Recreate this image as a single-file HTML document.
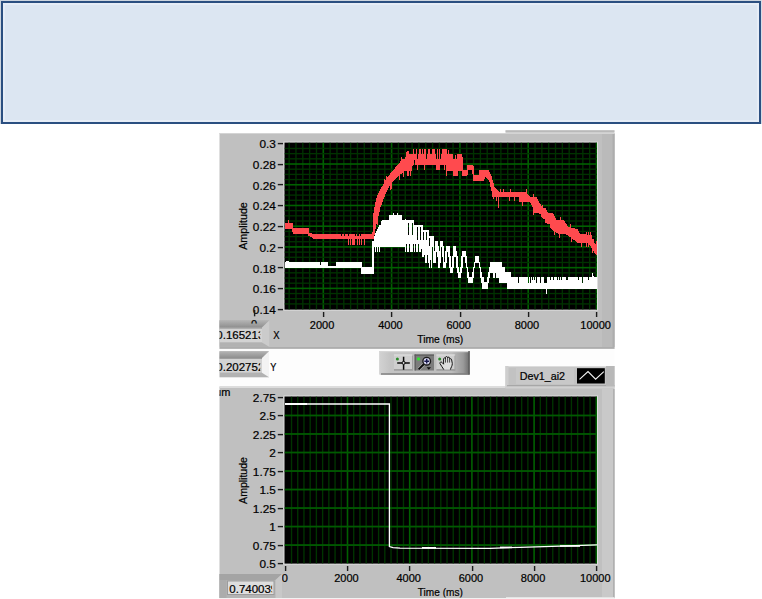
<!DOCTYPE html>
<html lang="en"><head><meta charset="utf-8"><title>Waveform charts</title>
<style>html,body{margin:0;padding:0;background:#fff;}body{width:762px;height:599px;overflow:hidden;}svg{display:block;}text{font-family:"Liberation Sans", "DejaVu Sans", sans-serif;font-size:11px;fill:#000;stroke:#000;stroke-width:0.22px;}.yl{font-size:11.8px;}.cv{font-size:11.5px;}</style></head><body>
<svg width="762" height="599" viewBox="0 0 762 599">
<rect x="0" y="0" width="762" height="599" fill="#ffffff"/>
<rect x="2" y="2" width="758" height="121" fill="#dce6f2" stroke="#2b4f81" stroke-width="2"/>
<rect x="4" y="4" width="754" height="117" fill="none" stroke="#e6edf7" stroke-width="2"/>
<rect x="0" y="0" width="762" height="1" fill="#cdd5df"/><rect x="0" y="0" width="1" height="124" fill="#cdd5df"/><rect x="761" y="0" width="1" height="124" fill="#d6dde6"/>
<rect x="505.5" y="130.5" width="109" height="4" fill="#cfcfcf"/>
<rect x="505.5" y="130.5" width="109" height="1" fill="#a4a4a4"/>
<rect x="219.5" y="133" width="395" height="215.5" fill="#c0c0c0"/>
<rect x="219.5" y="133" width="395" height="1" fill="#d4d4d4"/>
<rect x="219.5" y="347.5" width="395" height="1.2" fill="#9a9a9a"/>
<rect x="602" y="134" width="12.5" height="213" fill="#bababa"/>
<rect x="612.5" y="134" width="2" height="213" fill="#adadad"/>
<rect x="283.5" y="141.6" width="314.5" height="169" fill="#dedede"/>
<rect x="284.5" y="142.6" width="312.5" height="167.00000000000003" fill="#000"/>
<clipPath id="c1"><rect x="284.5" y="142.6" width="312.5" height="167.00000000000003"/></clipPath>
<g clip-path="url(#c1)">
<rect x="288.47" y="142.6" width="1.35" height="167.00000000000003" fill="#003200"/>
<rect x="295.3" y="142.6" width="1.35" height="167.00000000000003" fill="#003200"/>
<rect x="302.13" y="142.6" width="1.35" height="167.00000000000003" fill="#003200"/>
<rect x="308.96" y="142.6" width="1.35" height="167.00000000000003" fill="#003200"/>
<rect x="315.79" y="142.6" width="1.35" height="167.00000000000003" fill="#003200"/>
<rect x="322.5" y="142.6" width="1.6" height="167.00000000000003" fill="#006000"/>
<rect x="329.45" y="142.6" width="1.35" height="167.00000000000003" fill="#003200"/>
<rect x="336.28" y="142.6" width="1.35" height="167.00000000000003" fill="#003200"/>
<rect x="343.11" y="142.6" width="1.35" height="167.00000000000003" fill="#003200"/>
<rect x="349.94" y="142.6" width="1.35" height="167.00000000000003" fill="#003200"/>
<rect x="356.77" y="142.6" width="1.35" height="167.00000000000003" fill="#003200"/>
<rect x="363.6" y="142.6" width="1.35" height="167.00000000000003" fill="#003200"/>
<rect x="370.43" y="142.6" width="1.35" height="167.00000000000003" fill="#003200"/>
<rect x="377.26" y="142.6" width="1.35" height="167.00000000000003" fill="#003200"/>
<rect x="384.09" y="142.6" width="1.35" height="167.00000000000003" fill="#003200"/>
<rect x="390.8" y="142.6" width="1.6" height="167.00000000000003" fill="#006000"/>
<rect x="397.75" y="142.6" width="1.35" height="167.00000000000003" fill="#003200"/>
<rect x="404.58" y="142.6" width="1.35" height="167.00000000000003" fill="#003200"/>
<rect x="411.41" y="142.6" width="1.35" height="167.00000000000003" fill="#003200"/>
<rect x="418.24" y="142.6" width="1.35" height="167.00000000000003" fill="#003200"/>
<rect x="425.07" y="142.6" width="1.35" height="167.00000000000003" fill="#003200"/>
<rect x="431.9" y="142.6" width="1.35" height="167.00000000000003" fill="#003200"/>
<rect x="438.73" y="142.6" width="1.35" height="167.00000000000003" fill="#003200"/>
<rect x="445.56" y="142.6" width="1.35" height="167.00000000000003" fill="#003200"/>
<rect x="452.39" y="142.6" width="1.35" height="167.00000000000003" fill="#003200"/>
<rect x="459.1" y="142.6" width="1.6" height="167.00000000000003" fill="#006000"/>
<rect x="466.05" y="142.6" width="1.35" height="167.00000000000003" fill="#003200"/>
<rect x="472.88" y="142.6" width="1.35" height="167.00000000000003" fill="#003200"/>
<rect x="479.71" y="142.6" width="1.35" height="167.00000000000003" fill="#003200"/>
<rect x="486.54" y="142.6" width="1.35" height="167.00000000000003" fill="#003200"/>
<rect x="493.37" y="142.6" width="1.35" height="167.00000000000003" fill="#003200"/>
<rect x="500.2" y="142.6" width="1.35" height="167.00000000000003" fill="#003200"/>
<rect x="507.03" y="142.6" width="1.35" height="167.00000000000003" fill="#003200"/>
<rect x="513.86" y="142.6" width="1.35" height="167.00000000000003" fill="#003200"/>
<rect x="520.69" y="142.6" width="1.35" height="167.00000000000003" fill="#003200"/>
<rect x="527.4" y="142.6" width="1.6" height="167.00000000000003" fill="#006000"/>
<rect x="534.35" y="142.6" width="1.35" height="167.00000000000003" fill="#003200"/>
<rect x="541.18" y="142.6" width="1.35" height="167.00000000000003" fill="#003200"/>
<rect x="548.01" y="142.6" width="1.35" height="167.00000000000003" fill="#003200"/>
<rect x="554.84" y="142.6" width="1.35" height="167.00000000000003" fill="#003200"/>
<rect x="561.67" y="142.6" width="1.35" height="167.00000000000003" fill="#003200"/>
<rect x="568.5" y="142.6" width="1.35" height="167.00000000000003" fill="#003200"/>
<rect x="575.33" y="142.6" width="1.35" height="167.00000000000003" fill="#003200"/>
<rect x="582.16" y="142.6" width="1.35" height="167.00000000000003" fill="#003200"/>
<rect x="588.99" y="142.6" width="1.35" height="167.00000000000003" fill="#003200"/>
<rect x="595.7" y="142.6" width="1.6" height="167.00000000000003" fill="#006000"/>
<rect x="284.5" y="303.24" width="312.5" height="1.35" fill="#003200"/>
<rect x="284.5" y="298.06" width="312.5" height="1.35" fill="#003200"/>
<rect x="284.5" y="292.88" width="312.5" height="1.35" fill="#003200"/>
<rect x="284.5" y="287.58" width="312.5" height="1.6" fill="#006000"/>
<rect x="284.5" y="282.51" width="312.5" height="1.35" fill="#003200"/>
<rect x="284.5" y="277.33" width="312.5" height="1.35" fill="#003200"/>
<rect x="284.5" y="272.15" width="312.5" height="1.35" fill="#003200"/>
<rect x="284.5" y="266.85" width="312.5" height="1.6" fill="#006000"/>
<rect x="284.5" y="261.79" width="312.5" height="1.35" fill="#003200"/>
<rect x="284.5" y="256.61" width="312.5" height="1.35" fill="#003200"/>
<rect x="284.5" y="251.43" width="312.5" height="1.35" fill="#003200"/>
<rect x="284.5" y="246.12" width="312.5" height="1.6" fill="#006000"/>
<rect x="284.5" y="241.06" width="312.5" height="1.35" fill="#003200"/>
<rect x="284.5" y="235.88" width="312.5" height="1.35" fill="#003200"/>
<rect x="284.5" y="230.7" width="312.5" height="1.35" fill="#003200"/>
<rect x="284.5" y="225.4" width="312.5" height="1.6" fill="#006000"/>
<rect x="284.5" y="220.34" width="312.5" height="1.35" fill="#003200"/>
<rect x="284.5" y="215.16" width="312.5" height="1.35" fill="#003200"/>
<rect x="284.5" y="209.98" width="312.5" height="1.35" fill="#003200"/>
<rect x="284.5" y="204.68" width="312.5" height="1.6" fill="#006000"/>
<rect x="284.5" y="199.61" width="312.5" height="1.35" fill="#003200"/>
<rect x="284.5" y="194.43" width="312.5" height="1.35" fill="#003200"/>
<rect x="284.5" y="189.25" width="312.5" height="1.35" fill="#003200"/>
<rect x="284.5" y="183.95" width="312.5" height="1.6" fill="#006000"/>
<rect x="284.5" y="178.89" width="312.5" height="1.35" fill="#003200"/>
<rect x="284.5" y="173.71" width="312.5" height="1.35" fill="#003200"/>
<rect x="284.5" y="168.53" width="312.5" height="1.35" fill="#003200"/>
<rect x="284.5" y="163.22" width="312.5" height="1.6" fill="#006000"/>
<rect x="284.5" y="158.16" width="312.5" height="1.35" fill="#003200"/>
<rect x="284.5" y="152.98" width="312.5" height="1.35" fill="#003200"/>
<rect x="284.5" y="147.8" width="312.5" height="1.35" fill="#003200"/>
<g fill="#ff4a4e" shape-rendering="crispEdges"><rect x="285" y="222.5" width="1" height="6.8"/><rect x="286" y="222.5" width="1" height="6.8"/><rect x="287" y="222.5" width="1" height="6.8"/><rect x="288" y="219.5" width="1" height="9.8"/><rect x="289" y="222.5" width="1" height="6.8"/><rect x="290" y="222.5" width="1" height="6.8"/><rect x="291" y="222.5" width="1" height="6.8"/><rect x="292" y="222.5" width="1" height="9.2"/><rect x="293" y="227.8" width="1" height="6.4"/><rect x="294" y="227.8" width="1" height="6.4"/><rect x="295" y="227.8" width="1" height="6.4"/><rect x="296" y="227.8" width="1" height="6.4"/><rect x="297" y="227.8" width="1" height="6.4"/><rect x="298" y="227.8" width="1" height="6.4"/><rect x="299" y="227.8" width="1" height="6.4"/><rect x="300" y="227.8" width="1" height="6.4"/><rect x="301" y="227.8" width="1" height="6.4"/><rect x="302" y="227.8" width="1" height="6.4"/><rect x="303" y="227.8" width="1" height="6.4"/><rect x="304" y="227.8" width="1" height="6.4"/><rect x="305" y="227.8" width="1" height="6.4"/><rect x="306" y="227.8" width="1" height="6.4"/><rect x="307" y="227.8" width="1" height="6.4"/><rect x="308" y="227.8" width="1" height="7.9"/><rect x="309" y="233.1" width="1" height="3.2"/><rect x="310" y="233.3" width="1" height="3.6"/><rect x="311" y="233.4" width="1" height="4"/><rect x="312" y="233.6" width="1" height="4.4"/><rect x="313" y="233.8" width="1" height="4.8"/><rect x="314" y="234" width="1" height="5.3"/><rect x="315" y="234.2" width="1" height="5.1"/><rect x="316" y="234.2" width="1" height="5.1"/><rect x="317" y="234.2" width="1" height="5.1"/><rect x="318" y="234.2" width="1" height="5.1"/><rect x="319" y="234.2" width="1" height="5.1"/><rect x="320" y="234.2" width="1" height="5.1"/><rect x="321" y="234.2" width="1" height="5.1"/><rect x="322" y="234.2" width="1" height="5.1"/><rect x="323" y="234.2" width="1" height="5.1"/><rect x="324" y="234.2" width="1" height="5.1"/><rect x="325" y="234.2" width="1" height="5.1"/><rect x="326" y="234.2" width="1" height="5.1"/><rect x="327" y="234.2" width="1" height="5.1"/><rect x="328" y="234.2" width="1" height="5.1"/><rect x="329" y="234.2" width="1" height="5.1"/><rect x="330" y="234.2" width="1" height="5.1"/><rect x="331" y="234.2" width="1" height="5.1"/><rect x="332" y="234.2" width="1" height="5.1"/><rect x="333" y="234.2" width="1" height="5.1"/><rect x="334" y="234.2" width="1" height="5.1"/><rect x="335" y="234.2" width="1" height="5.1"/><rect x="336" y="234.2" width="1" height="5.1"/><rect x="337" y="234.2" width="1" height="5.1"/><rect x="338" y="234.2" width="1" height="5.1"/><rect x="339" y="234.2" width="1" height="5.1"/><rect x="340" y="234.2" width="1" height="5.1"/><rect x="341" y="235.7" width="1" height="3.6"/><rect x="342" y="234.2" width="1" height="5.1"/><rect x="343" y="234.2" width="1" height="5.1"/><rect x="344" y="235.7" width="1" height="3.6"/><rect x="345" y="234.2" width="1" height="5.1"/><rect x="346" y="234.2" width="1" height="5.1"/><rect x="347" y="234.2" width="1" height="5.1"/><rect x="348" y="235.7" width="1" height="8.8"/><rect x="349" y="234.2" width="1" height="5.1"/><rect x="350" y="234.2" width="1" height="10.3"/><rect x="351" y="234.2" width="1" height="5.1"/><rect x="352" y="234.2" width="1" height="10.3"/><rect x="353" y="234.2" width="1" height="10.3"/><rect x="354" y="234.2" width="1" height="10.3"/><rect x="355" y="235.7" width="1" height="3.6"/><rect x="356" y="234.2" width="1" height="5.1"/><rect x="357" y="235.7" width="1" height="8.8"/><rect x="358" y="235.7" width="1" height="3.6"/><rect x="359" y="234.2" width="1" height="10.3"/><rect x="360" y="235.7" width="1" height="3.6"/><rect x="361" y="234.2" width="1" height="10.3"/><rect x="362" y="234.2" width="1" height="5.1"/><rect x="363" y="234.2" width="1" height="5.1"/><rect x="364" y="234.2" width="1" height="10.3"/><rect x="365" y="234.2" width="1" height="5.1"/><rect x="366" y="234.2" width="1" height="5.1"/><rect x="367" y="234.2" width="1" height="5.1"/><rect x="368" y="234.2" width="1" height="5.1"/><rect x="369" y="234.2" width="1" height="5.1"/><rect x="370" y="234.2" width="1" height="5.1"/><rect x="371" y="234.2" width="1" height="5.1"/><rect x="372" y="231.7" width="1" height="7.6"/><rect x="373" y="213.4" width="1" height="25.8"/><rect x="374" y="206.5" width="1" height="28.7"/><rect x="375" y="202" width="1" height="26.7"/><rect x="376" y="197.5" width="1" height="26.9"/><rect x="377" y="195.2" width="1" height="29.9"/><rect x="378" y="193.2" width="1" height="22.6"/><rect x="379" y="191.2" width="1" height="20.3"/><rect x="380" y="189.2" width="1" height="18.1"/><rect x="381" y="187.3" width="1" height="17.3"/><rect x="382" y="185.6" width="1" height="16.4"/><rect x="383" y="183.8" width="1" height="15.5"/><rect x="384" y="179.1" width="1" height="17.5"/><rect x="385" y="180.3" width="1" height="14"/><rect x="386" y="175.6" width="1" height="16.8"/><rect x="387" y="177" width="1" height="13.3"/><rect x="388" y="175.8" width="1" height="12.5"/><rect x="389" y="174.6" width="1" height="11.8"/><rect x="390" y="173.4" width="1" height="16.2"/><rect x="391" y="172.2" width="1" height="16.3"/><rect x="392" y="171" width="1" height="11.4"/><rect x="393" y="169.8" width="1" height="11.5"/><rect x="394" y="168.6" width="1" height="11.6"/><rect x="395" y="167.4" width="1" height="11.6"/><rect x="396" y="166.2" width="1" height="11.7"/><rect x="397" y="165" width="1" height="12"/><rect x="398" y="163.8" width="1" height="12.3"/><rect x="399" y="162.6" width="1" height="17.6"/><rect x="400" y="161.4" width="1" height="13"/><rect x="401" y="157.2" width="1" height="16.3"/><rect x="402" y="159.4" width="1" height="13.2"/><rect x="403" y="159.2" width="1" height="17.6"/><rect x="404" y="158.9" width="1" height="12.1"/><rect x="405" y="156.9" width="1" height="14.1"/><rect x="406" y="151.6" width="1" height="19.4"/><rect x="407" y="151.1" width="1" height="24.9"/><rect x="408" y="151" width="1" height="25"/><rect x="409" y="153.9" width="1" height="17.1"/><rect x="410" y="153.8" width="1" height="22.2"/><rect x="411" y="153.7" width="1" height="17.3"/><rect x="412" y="153.6" width="1" height="12.8"/><rect x="413" y="149.2" width="1" height="16"/><rect x="414" y="154.4" width="1" height="5.6"/><rect x="415" y="154.4" width="1" height="10.8"/><rect x="416" y="149.2" width="1" height="16"/><rect x="417" y="158.6" width="1" height="11.8"/><rect x="418" y="154.4" width="1" height="10.8"/><rect x="419" y="149.2" width="1" height="16"/><rect x="420" y="149.2" width="1" height="16"/><rect x="421" y="154.4" width="1" height="10.8"/><rect x="422" y="149.2" width="1" height="16"/><rect x="423" y="154.4" width="1" height="10.8"/><rect x="424" y="149.2" width="1" height="21.2"/><rect x="425" y="149.2" width="1" height="16"/><rect x="426" y="158.6" width="1" height="6.6"/><rect x="427" y="154.4" width="1" height="10.8"/><rect x="428" y="149.2" width="1" height="16"/><rect x="429" y="149.2" width="1" height="16"/><rect x="430" y="154.4" width="1" height="10.8"/><rect x="431" y="154.4" width="1" height="10.8"/><rect x="432" y="149.2" width="1" height="16"/><rect x="433" y="149.2" width="1" height="16"/><rect x="434" y="149.2" width="1" height="16"/><rect x="435" y="154.4" width="1" height="10.8"/><rect x="436" y="158.6" width="1" height="11.8"/><rect x="437" y="149.2" width="1" height="21.2"/><rect x="438" y="158.6" width="1" height="11.8"/><rect x="439" y="149.2" width="1" height="21.2"/><rect x="440" y="158.6" width="1" height="6.6"/><rect x="441" y="154.4" width="1" height="10.8"/><rect x="442" y="149.2" width="1" height="16"/><rect x="443" y="149.2" width="1" height="16"/><rect x="444" y="149.2" width="1" height="21.2"/><rect x="445" y="149.2" width="1" height="16"/><rect x="446" y="149.2" width="1" height="26.4"/><rect x="447" y="154.2" width="1" height="16.8"/><rect x="448" y="150.2" width="1" height="20.8"/><rect x="449" y="154.2" width="1" height="16.8"/><rect x="450" y="154.2" width="1" height="16.8"/><rect x="451" y="154.2" width="1" height="16.8"/><rect x="452" y="154.2" width="1" height="16.8"/><rect x="453" y="158.9" width="1" height="17.3"/><rect x="454" y="158.9" width="1" height="17.3"/><rect x="455" y="154.9" width="1" height="21.3"/><rect x="456" y="158.9" width="1" height="17.3"/><rect x="457" y="154.2" width="1" height="22"/><rect x="458" y="154.2" width="1" height="16.8"/><rect x="459" y="154.2" width="1" height="16.8"/><rect x="460" y="154.2" width="1" height="16.8"/><rect x="461" y="154.2" width="1" height="16.8"/><rect x="462" y="156.5" width="1" height="19.5"/><rect x="463" y="170" width="1" height="6"/><rect x="464" y="170" width="1" height="6"/><rect x="465" y="170" width="1" height="6"/><rect x="466" y="170" width="1" height="6"/><rect x="467" y="164.8" width="1" height="10.4"/><rect x="468" y="164.8" width="1" height="5.2"/><rect x="469" y="164.8" width="1" height="5.2"/><rect x="470" y="164.8" width="1" height="5.2"/><rect x="471" y="164.8" width="1" height="5.2"/><rect x="472" y="164.8" width="1" height="9.2"/><rect x="473" y="166" width="1" height="14.5"/><rect x="474" y="174.5" width="1" height="6"/><rect x="475" y="174.7" width="1" height="5.8"/><rect x="476" y="174.9" width="1" height="5.6"/><rect x="477" y="175" width="1" height="5.5"/><rect x="478" y="175.2" width="1" height="5.3"/><rect x="479" y="170" width="1" height="10.5"/><rect x="480" y="170" width="1" height="10.5"/><rect x="481" y="170" width="1" height="10.5"/><rect x="482" y="170" width="1" height="10.5"/><rect x="483" y="170" width="1" height="10.5"/><rect x="484" y="170" width="1" height="8.7"/><rect x="485" y="170" width="1" height="6.9"/><rect x="486" y="170" width="1" height="7.9"/><rect x="487" y="170" width="1" height="8.9"/><rect x="488" y="170.2" width="1" height="9.7"/><rect x="489" y="172.2" width="1" height="10.1"/><rect x="490" y="174.2" width="1" height="12.7"/><rect x="491" y="176.4" width="1" height="14.8"/><rect x="492" y="179.9" width="1" height="17.3"/><rect x="493" y="183.4" width="1" height="15.8"/><rect x="494" y="186.6" width="1" height="10.4"/><rect x="495" y="187.8" width="1" height="9.2"/><rect x="496" y="189" width="1" height="12"/><rect x="497" y="190.2" width="1" height="6.8"/><rect x="498" y="191.3" width="1" height="17"/><rect x="499" y="191.8" width="1" height="5.2"/><rect x="500" y="188.8" width="1" height="8.2"/><rect x="501" y="191.8" width="1" height="5.2"/><rect x="502" y="191.8" width="1" height="5.2"/><rect x="503" y="188.8" width="1" height="8.2"/><rect x="504" y="191.8" width="1" height="5.2"/><rect x="505" y="191.8" width="1" height="5.2"/><rect x="506" y="191.8" width="1" height="5.2"/><rect x="507" y="191.8" width="1" height="5.2"/><rect x="508" y="191.8" width="1" height="5.2"/><rect x="509" y="191.8" width="1" height="9.2"/><rect x="510" y="188.8" width="1" height="8.2"/><rect x="511" y="191.8" width="1" height="5.2"/><rect x="512" y="191.8" width="1" height="5.2"/><rect x="513" y="191.8" width="1" height="5.2"/><rect x="514" y="191.8" width="1" height="9.2"/><rect x="515" y="191.8" width="1" height="5.2"/><rect x="516" y="191.8" width="1" height="5.2"/><rect x="517" y="191.8" width="1" height="5.2"/><rect x="518" y="191.8" width="1" height="5.2"/><rect x="519" y="191.8" width="1" height="9.8"/><rect x="520" y="191.8" width="1" height="9.8"/><rect x="521" y="191.8" width="1" height="9.8"/><rect x="522" y="191.8" width="1" height="13.8"/><rect x="523" y="191.8" width="1" height="9.8"/><rect x="524" y="191.8" width="1" height="9.8"/><rect x="525" y="191.8" width="1" height="9.8"/><rect x="526" y="189.4" width="1" height="12.2"/><rect x="527" y="193.6" width="1" height="8"/><rect x="528" y="194.8" width="1" height="6.8"/><rect x="529" y="195.9" width="1" height="5.7"/><rect x="530" y="197" width="1" height="6.4"/><rect x="531" y="197" width="1" height="8.3"/><rect x="532" y="197" width="1" height="10.3"/><rect x="533" y="194" width="1" height="20.5"/><rect x="534" y="197" width="1" height="15.8"/><rect x="535" y="197" width="1" height="16"/><rect x="536" y="197.2" width="1" height="15.9"/><rect x="537" y="198.9" width="1" height="14.3"/><rect x="538" y="200.7" width="1" height="12.6"/><rect x="539" y="202.5" width="1" height="11"/><rect x="540" y="204.2" width="1" height="9.3"/><rect x="541" y="205.9" width="1" height="11.4"/><rect x="542" y="204.5" width="1" height="13.7"/><rect x="543" y="207.5" width="1" height="11"/><rect x="544" y="207.5" width="1" height="11.3"/><rect x="545" y="207.7" width="1" height="15.6"/><rect x="546" y="210" width="1" height="13.4"/><rect x="547" y="212.3" width="1" height="11.2"/><rect x="548" y="212.8" width="1" height="10.9"/><rect x="549" y="212.8" width="1" height="11.1"/><rect x="550" y="212.7" width="1" height="15.3"/><rect x="551" y="212.7" width="1" height="16.7"/><rect x="552" y="212.7" width="1" height="17.3"/><rect x="553" y="213.9" width="1" height="16.8"/><rect x="554" y="215.9" width="1" height="19.5"/><rect x="555" y="217.9" width="1" height="14.1"/><rect x="556" y="219.7" width="1" height="13"/><rect x="557" y="219.7" width="1" height="13.7"/><rect x="558" y="219.7" width="1" height="14"/><rect x="559" y="219.7" width="1" height="18"/><rect x="560" y="216.7" width="1" height="17"/><rect x="561" y="219.7" width="1" height="14"/><rect x="562" y="219.7" width="1" height="14"/><rect x="563" y="219.8" width="1" height="13.9"/><rect x="564" y="221.3" width="1" height="12.4"/><rect x="565" y="222.8" width="1" height="11.2"/><rect x="566" y="224.3" width="1" height="10.4"/><rect x="567" y="225.8" width="1" height="9.6"/><rect x="568" y="226.8" width="1" height="9.3"/><rect x="569" y="227" width="1" height="9.7"/><rect x="570" y="224.3" width="1" height="13.1"/><rect x="571" y="227.5" width="1" height="14.5"/><rect x="572" y="227.8" width="1" height="11"/><rect x="573" y="228" width="1" height="11.6"/><rect x="574" y="228.3" width="1" height="12.1"/><rect x="575" y="228.5" width="1" height="12.6"/><rect x="576" y="228.8" width="1" height="13.2"/><rect x="577" y="229.2" width="1" height="13.6"/><rect x="578" y="231.2" width="1" height="11.8"/><rect x="579" y="233.1" width="1" height="9.9"/><rect x="580" y="233.8" width="1" height="9.2"/><rect x="581" y="233.9" width="1" height="13.1"/><rect x="582" y="234" width="1" height="9"/><rect x="583" y="234.1" width="1" height="8.9"/><rect x="584" y="234.2" width="1" height="8.8"/><rect x="585" y="234.3" width="1" height="8.7"/><rect x="586" y="231.5" width="1" height="15.5"/><rect x="587" y="234.6" width="1" height="8.4"/><rect x="588" y="231.7" width="1" height="15.5"/><rect x="589" y="234.8" width="1" height="9.9"/><rect x="590" y="231.9" width="1" height="14.3"/><rect x="591" y="235.3" width="1" height="12.4"/><rect x="592" y="238.7" width="1" height="14.6"/><rect x="593" y="239" width="1" height="11.9"/><rect x="594" y="243.3" width="1" height="9.3"/><rect x="595" y="243.6" width="1" height="10.7"/><rect x="596" y="241" width="1" height="14.3"/></g>
<g fill="#ffffff" shape-rendering="crispEdges"><rect x="285" y="262.3" width="1" height="5.5"/><rect x="286" y="260.8" width="1" height="7"/><rect x="287" y="260.8" width="1" height="7"/><rect x="288" y="260.8" width="1" height="7"/><rect x="289" y="262.3" width="1" height="5.5"/><rect x="290" y="262.3" width="1" height="5.5"/><rect x="291" y="262.3" width="1" height="5.5"/><rect x="292" y="262.3" width="1" height="5.5"/><rect x="293" y="262.3" width="1" height="5.5"/><rect x="294" y="262.3" width="1" height="5.5"/><rect x="295" y="262.3" width="1" height="5.5"/><rect x="296" y="262.3" width="1" height="5.5"/><rect x="297" y="262.3" width="1" height="5.5"/><rect x="298" y="262.3" width="1" height="5.5"/><rect x="299" y="262.3" width="1" height="5.5"/><rect x="300" y="262.3" width="1" height="5.5"/><rect x="301" y="262.3" width="1" height="5.5"/><rect x="302" y="262.3" width="1" height="5.5"/><rect x="303" y="262.3" width="1" height="5.5"/><rect x="304" y="262.3" width="1" height="5.5"/><rect x="305" y="262.3" width="1" height="5.5"/><rect x="306" y="262.3" width="1" height="5.5"/><rect x="307" y="262.3" width="1" height="5.5"/><rect x="308" y="262.3" width="1" height="5.5"/><rect x="309" y="262.3" width="1" height="5.5"/><rect x="310" y="262.3" width="1" height="5.5"/><rect x="311" y="262.3" width="1" height="5.5"/><rect x="312" y="262.3" width="1" height="5.5"/><rect x="313" y="262.3" width="1" height="5.5"/><rect x="314" y="262.3" width="1" height="5.5"/><rect x="315" y="262.3" width="1" height="5.5"/><rect x="316" y="262.3" width="1" height="5.5"/><rect x="317" y="262.3" width="1" height="5.5"/><rect x="318" y="262.3" width="1" height="5.5"/><rect x="319" y="262.3" width="1" height="5.5"/><rect x="320" y="265" width="1" height="2.8"/><rect x="321" y="262.3" width="1" height="5.5"/><rect x="322" y="262.3" width="1" height="5.5"/><rect x="323" y="262.3" width="1" height="5.5"/><rect x="324" y="262.3" width="1" height="5.5"/><rect x="325" y="262.3" width="1" height="5.5"/><rect x="326" y="262.3" width="1" height="5.5"/><rect x="327" y="262.3" width="1" height="5.5"/><rect x="328" y="266.4" width="1" height="1.4"/><rect x="329" y="266.4" width="1" height="1.4"/><rect x="330" y="266.4" width="1" height="1.4"/><rect x="331" y="266.4" width="1" height="1.4"/><rect x="332" y="266.4" width="1" height="1.4"/><rect x="333" y="266.4" width="1" height="1.4"/><rect x="334" y="266.4" width="1" height="1.4"/><rect x="335" y="266.4" width="1" height="1.4"/><rect x="336" y="262.3" width="1" height="5.5"/><rect x="337" y="262.3" width="1" height="5.5"/><rect x="338" y="262.3" width="1" height="5.5"/><rect x="339" y="262.3" width="1" height="5.5"/><rect x="340" y="262.3" width="1" height="5.5"/><rect x="341" y="262.3" width="1" height="5.5"/><rect x="342" y="262.3" width="1" height="5.5"/><rect x="343" y="262.3" width="1" height="5.5"/><rect x="344" y="262.3" width="1" height="5.5"/><rect x="345" y="262.3" width="1" height="5.5"/><rect x="346" y="262.3" width="1" height="5.5"/><rect x="347" y="262.3" width="1" height="5.5"/><rect x="348" y="262.3" width="1" height="5.5"/><rect x="349" y="262.3" width="1" height="5.5"/><rect x="350" y="262.3" width="1" height="5.5"/><rect x="351" y="262.3" width="1" height="5.5"/><rect x="352" y="262.3" width="1" height="5.5"/><rect x="353" y="262.3" width="1" height="5.5"/><rect x="354" y="262.3" width="1" height="5.5"/><rect x="355" y="262.3" width="1" height="5.5"/><rect x="356" y="262.3" width="1" height="5.5"/><rect x="357" y="262.3" width="1" height="5.5"/><rect x="358" y="262.3" width="1" height="5.5"/><rect x="359" y="262.3" width="1" height="5.5"/><rect x="360" y="262.3" width="1" height="5.5"/><rect x="361" y="262.3" width="1" height="11.3"/><rect x="362" y="267" width="1" height="6.6"/><rect x="363" y="267" width="1" height="6.6"/><rect x="364" y="267" width="1" height="6.6"/><rect x="365" y="267" width="1" height="6.6"/><rect x="366" y="267" width="1" height="6.6"/><rect x="367" y="267" width="1" height="6.6"/><rect x="368" y="267" width="1" height="6.6"/><rect x="369" y="267" width="1" height="6.6"/><rect x="370" y="267" width="1" height="6.6"/><rect x="371" y="267" width="1" height="6.6"/><rect x="372" y="241" width="1" height="32.6"/><rect x="373" y="241" width="1" height="32.6"/><rect x="374" y="236" width="1" height="10.9"/><rect x="375" y="232.9" width="1" height="18.7"/><rect x="376" y="230.6" width="1" height="16.3"/><rect x="377" y="228.6" width="1" height="23"/><rect x="378" y="226.5" width="1" height="20.4"/><rect x="379" y="224.5" width="1" height="27.1"/><rect x="380" y="224.5" width="1" height="22.4"/><rect x="381" y="221" width="1" height="25.9"/><rect x="382" y="220" width="1" height="26.9"/><rect x="383" y="219.9" width="1" height="27"/><rect x="384" y="219.8" width="1" height="27.1"/><rect x="385" y="219.8" width="1" height="27.1"/><rect x="386" y="219.7" width="1" height="27.2"/><rect x="387" y="219.7" width="1" height="27.2"/><rect x="388" y="219.6" width="1" height="27.3"/><rect x="389" y="214.8" width="1" height="32.1"/><rect x="390" y="214.8" width="1" height="32.1"/><rect x="391" y="214.8" width="1" height="32.1"/><rect x="392" y="214.8" width="1" height="32.1"/><rect x="393" y="213" width="1" height="33.9"/><rect x="394" y="214.8" width="1" height="32.1"/><rect x="395" y="214.8" width="1" height="32.1"/><rect x="396" y="214.8" width="1" height="32.1"/><rect x="397" y="213" width="1" height="33.9"/><rect x="398" y="214.8" width="1" height="32.1"/><rect x="399" y="214.8" width="1" height="32.1"/><rect x="400" y="214.8" width="1" height="32.1"/><rect x="401" y="214.8" width="1" height="32.1"/><rect x="402" y="219.6" width="1" height="27.3"/><rect x="403" y="219.6" width="1" height="27.3"/><rect x="404" y="219.6" width="1" height="27.3"/><rect x="405" y="219" width="1" height="32.7"/><rect x="406" y="220" width="1" height="24.2"/><rect x="407" y="220" width="1" height="32.2"/><rect x="408" y="220" width="1" height="3"/><rect x="408" y="235" width="1" height="17.2"/><rect x="409" y="220" width="1" height="24.2"/><rect x="410" y="220" width="1" height="32.2"/><rect x="411" y="220" width="1" height="32.2"/><rect x="412" y="220" width="1" height="3"/><rect x="412" y="235" width="1" height="17.2"/><rect x="413" y="220" width="1" height="24.2"/><rect x="414" y="225.2" width="1" height="27"/><rect x="415" y="225.2" width="1" height="19"/><rect x="416" y="225.2" width="1" height="27"/><rect x="417" y="225.2" width="1" height="2"/><rect x="417" y="240.2" width="1" height="12"/><rect x="418" y="225.2" width="1" height="19"/><rect x="419" y="225.2" width="1" height="27"/><rect x="420" y="225.2" width="1" height="2"/><rect x="420" y="240.2" width="1" height="12"/><rect x="421" y="225.2" width="1" height="24.2"/><rect x="422" y="225.2" width="1" height="32.2"/><rect x="423" y="230.4" width="1" height="2"/><rect x="423" y="240.4" width="1" height="17"/><rect x="424" y="230.4" width="1" height="24.2"/><rect x="425" y="230.4" width="1" height="32.2"/><rect x="426" y="230.4" width="1" height="2"/><rect x="426" y="240.4" width="1" height="22.2"/><rect x="427" y="230.4" width="1" height="24.2"/><rect x="428" y="230.4" width="1" height="32.2"/><rect x="429" y="235.6" width="1" height="2"/><rect x="429" y="245.6" width="1" height="22.2"/><rect x="430" y="235.6" width="1" height="24.2"/><rect x="431" y="235.6" width="1" height="32.2"/><rect x="432" y="235.6" width="1" height="11.4"/><rect x="433" y="235.6" width="1" height="27"/><rect x="434" y="251.2" width="1" height="11.4"/><rect x="435" y="240.8" width="1" height="21.8"/><rect x="436" y="240.8" width="1" height="11.4"/><rect x="437" y="240.8" width="1" height="16.6"/><rect x="438" y="246" width="1" height="21.8"/><rect x="439" y="251.2" width="1" height="16.6"/><rect x="440" y="240.8" width="1" height="21.8"/><rect x="441" y="240.8" width="1" height="6.2"/><rect x="442" y="240.8" width="1" height="16.6"/><rect x="443" y="246" width="1" height="21.8"/><rect x="444" y="261.6" width="1" height="6.2"/><rect x="445" y="251.2" width="1" height="16.6"/><rect x="446" y="246" width="1" height="16.6"/><rect x="447" y="246" width="1" height="6.2"/><rect x="448" y="246" width="1" height="11.4"/><rect x="449" y="246" width="1" height="21.8"/><rect x="450" y="256.4" width="1" height="16.6"/><rect x="451" y="266.8" width="1" height="6.2"/><rect x="452" y="256.4" width="1" height="16.6"/><rect x="453" y="246" width="1" height="21.8"/><rect x="454" y="246" width="1" height="11.4"/><rect x="455" y="246" width="1" height="11.4"/><rect x="456" y="251.2" width="1" height="16.6"/><rect x="457" y="256.4" width="1" height="16.6"/><rect x="458" y="266.8" width="1" height="11.4"/><rect x="459" y="272" width="1" height="6.2"/><rect x="460" y="266.8" width="1" height="11.4"/><rect x="461" y="256.4" width="1" height="16.6"/><rect x="462" y="251.2" width="1" height="16.6"/><rect x="463" y="251.2" width="1" height="6.2"/><rect x="464" y="251.2" width="1" height="6.2"/><rect x="465" y="251.2" width="1" height="11.4"/><rect x="466" y="256.4" width="1" height="11.4"/><rect x="467" y="266.8" width="1" height="11.4"/><rect x="468" y="272" width="1" height="11.4"/><rect x="469" y="277.2" width="1" height="6.2"/><rect x="470" y="277.2" width="1" height="6.2"/><rect x="471" y="277.2" width="1" height="6.2"/><rect x="472" y="272" width="1" height="11.4"/><rect x="473" y="266.8" width="1" height="11.4"/><rect x="474" y="261.6" width="1" height="6.2"/><rect x="475" y="256.4" width="1" height="6.2"/><rect x="476" y="256.4" width="1" height="6.2"/><rect x="477" y="256.4" width="1" height="6.2"/><rect x="478" y="256.4" width="1" height="6.2"/><rect x="479" y="261.6" width="1" height="6.2"/><rect x="480" y="266.8" width="1" height="11.4"/><rect x="481" y="272" width="1" height="11.4"/><rect x="482" y="277.2" width="1" height="11.4"/><rect x="483" y="277.2" width="1" height="11.4"/><rect x="484" y="282.4" width="1" height="6.2"/><rect x="485" y="282.4" width="1" height="6.2"/><rect x="486" y="282.4" width="1" height="6.2"/><rect x="487" y="277.2" width="1" height="11.4"/><rect x="488" y="272" width="1" height="11.4"/><rect x="489" y="266.8" width="1" height="11.4"/><rect x="490" y="261.6" width="1" height="11.4"/><rect x="491" y="261.6" width="1" height="11.4"/><rect x="492" y="261.6" width="1" height="11.4"/><rect x="493" y="261.6" width="1" height="16.6"/><rect x="494" y="261.6" width="1" height="16.6"/><rect x="495" y="261.6" width="1" height="11.4"/><rect x="496" y="261.6" width="1" height="16.6"/><rect x="497" y="261.6" width="1" height="16.6"/><rect x="498" y="261.6" width="1" height="16.6"/><rect x="499" y="261.6" width="1" height="21.8"/><rect x="500" y="261.6" width="1" height="21.8"/><rect x="501" y="261.6" width="1" height="21.8"/><rect x="502" y="266.8" width="1" height="16.6"/><rect x="503" y="266.8" width="1" height="16.6"/><rect x="504" y="266.8" width="1" height="16.6"/><rect x="505" y="272" width="1" height="11.4"/><rect x="506" y="272" width="1" height="11.4"/><rect x="507" y="272" width="1" height="16.6"/><rect x="508" y="272" width="1" height="16.6"/><rect x="509" y="272" width="1" height="16.6"/><rect x="510" y="272" width="1" height="16.6"/><rect x="511" y="277.2" width="1" height="11.4"/><rect x="512" y="277.2" width="1" height="11.4"/><rect x="513" y="277.2" width="1" height="11.4"/><rect x="514" y="277.2" width="1" height="11.4"/><rect x="515" y="277.2" width="1" height="11.4"/><rect x="516" y="277.2" width="1" height="11.4"/><rect x="517" y="277.2" width="1" height="11.4"/><rect x="518" y="282.6" width="1" height="6"/><rect x="519" y="277.2" width="1" height="11.4"/><rect x="520" y="277.2" width="1" height="11.4"/><rect x="521" y="277.2" width="1" height="11.4"/><rect x="522" y="277.2" width="1" height="11.4"/><rect x="523" y="277.2" width="1" height="11.4"/><rect x="524" y="277.2" width="1" height="11.4"/><rect x="525" y="277.2" width="1" height="11.4"/><rect x="526" y="277.2" width="1" height="11.4"/><rect x="527" y="277.2" width="1" height="11.4"/><rect x="528" y="282.6" width="1" height="6"/><rect x="529" y="277.2" width="1" height="11.4"/><rect x="530" y="282.6" width="1" height="6"/><rect x="531" y="277.2" width="1" height="11.4"/><rect x="532" y="280.2" width="1" height="8.4"/><rect x="533" y="277.2" width="1" height="11.4"/><rect x="534" y="280.2" width="1" height="8.4"/><rect x="535" y="277.2" width="1" height="11.4"/><rect x="536" y="282.6" width="1" height="6"/><rect x="537" y="277.2" width="1" height="11.4"/><rect x="538" y="277.2" width="1" height="11.4"/><rect x="539" y="277.2" width="1" height="11.4"/><rect x="540" y="282.6" width="1" height="6"/><rect x="541" y="277.2" width="1" height="11.4"/><rect x="542" y="277.2" width="1" height="11.4"/><rect x="543" y="277.2" width="1" height="11.4"/><rect x="544" y="282.6" width="1" height="6"/><rect x="545" y="282.6" width="1" height="6"/><rect x="546" y="282.6" width="1" height="11.1"/><rect x="547" y="277.2" width="1" height="11.4"/><rect x="548" y="277.2" width="1" height="11.4"/><rect x="549" y="277.2" width="1" height="11.4"/><rect x="550" y="280.2" width="1" height="8.4"/><rect x="551" y="277.2" width="1" height="11.4"/><rect x="552" y="277.2" width="1" height="11.4"/><rect x="553" y="279.5" width="1" height="9.1"/><rect x="554" y="277.2" width="1" height="11.4"/><rect x="555" y="277.2" width="1" height="11.4"/><rect x="556" y="277.2" width="1" height="11.4"/><rect x="557" y="279.5" width="1" height="9.1"/><rect x="558" y="277.2" width="1" height="11.4"/><rect x="559" y="279.5" width="1" height="9.1"/><rect x="560" y="277.2" width="1" height="11.4"/><rect x="561" y="279.5" width="1" height="9.1"/><rect x="562" y="277.2" width="1" height="11.4"/><rect x="563" y="277.2" width="1" height="11.4"/><rect x="564" y="277.2" width="1" height="11.4"/><rect x="565" y="277.2" width="1" height="11.4"/><rect x="566" y="279.5" width="1" height="9.1"/><rect x="567" y="280.2" width="1" height="8.4"/><rect x="568" y="277.2" width="1" height="11.4"/><rect x="569" y="277.2" width="1" height="11.4"/><rect x="570" y="277.2" width="1" height="11.4"/><rect x="571" y="277.2" width="1" height="11.4"/><rect x="572" y="277.2" width="1" height="11.4"/><rect x="573" y="277.2" width="1" height="11.4"/><rect x="574" y="277.2" width="1" height="11.4"/><rect x="575" y="277.2" width="1" height="11.4"/><rect x="576" y="277.2" width="1" height="11.4"/><rect x="577" y="277.2" width="1" height="11.4"/><rect x="578" y="280.2" width="1" height="8.4"/><rect x="579" y="277.2" width="1" height="11.4"/><rect x="580" y="277.2" width="1" height="11.4"/><rect x="581" y="277.2" width="1" height="11.4"/><rect x="582" y="282.6" width="1" height="6"/><rect x="583" y="277.2" width="1" height="11.4"/><rect x="584" y="277.2" width="1" height="11.4"/><rect x="585" y="277.2" width="1" height="11.4"/><rect x="586" y="277.2" width="1" height="11.4"/><rect x="587" y="277.2" width="1" height="11.4"/><rect x="588" y="280.2" width="1" height="8.4"/><rect x="589" y="277.2" width="1" height="11.4"/><rect x="590" y="277.2" width="1" height="11.4"/><rect x="591" y="277.2" width="1" height="11.4"/><rect x="592" y="272.5" width="1" height="16.1"/><rect x="593" y="275.5" width="1" height="13.1"/><rect x="594" y="277.2" width="1" height="11.4"/><rect x="595" y="277.2" width="1" height="11.4"/><rect x="596" y="277.2" width="1" height="11.4"/></g>
</g>
<rect x="277.8" y="308.9" width="5.2" height="1.4" fill="#1c1c1c"/>
<text class="yl" x="275.8" y="313.9" text-anchor="end">0.14</text>
<rect x="277.8" y="287.9" width="5.2" height="1.4" fill="#1c1c1c"/>
<text class="yl" x="275.8" y="293.2" text-anchor="end">0.16</text>
<rect x="277.8" y="266.9" width="5.2" height="1.4" fill="#1c1c1c"/>
<text class="yl" x="275.8" y="272.5" text-anchor="end">0.18</text>
<rect x="277.8" y="246.9" width="5.2" height="1.4" fill="#1c1c1c"/>
<text class="yl" x="275.8" y="251.7" text-anchor="end">0.2</text>
<rect x="277.8" y="225.9" width="5.2" height="1.4" fill="#1c1c1c"/>
<text class="yl" x="275.8" y="231" text-anchor="end">0.22</text>
<rect x="277.8" y="204.9" width="5.2" height="1.4" fill="#1c1c1c"/>
<text class="yl" x="275.8" y="210.3" text-anchor="end">0.24</text>
<rect x="277.8" y="183.9" width="5.2" height="1.4" fill="#1c1c1c"/>
<text class="yl" x="275.8" y="189.6" text-anchor="end">0.26</text>
<rect x="277.8" y="163.9" width="5.2" height="1.4" fill="#1c1c1c"/>
<text class="yl" x="275.8" y="168.8" text-anchor="end">0.28</text>
<rect x="277.8" y="142.9" width="5.2" height="1.4" fill="#1c1c1c"/>
<text class="yl" x="275.8" y="148.1" text-anchor="end">0.3</text>
<rect x="322.9" y="312" width="1.4" height="5" fill="#1c1c1c"/>
<text x="322.1" y="328.5" text-anchor="middle">2000</text>
<rect x="390.9" y="312" width="1.4" height="5" fill="#1c1c1c"/>
<text x="390.4" y="328.5" text-anchor="middle">4000</text>
<rect x="459.9" y="312" width="1.4" height="5" fill="#1c1c1c"/>
<text x="458.7" y="328.5" text-anchor="middle">6000</text>
<rect x="527.9" y="312" width="1.4" height="5" fill="#1c1c1c"/>
<text x="527" y="328.5" text-anchor="middle">8000</text>
<rect x="595.9" y="312" width="1.4" height="5" fill="#1c1c1c"/>
<text x="595.6" y="328.5" text-anchor="middle">10000</text>
<text x="440.3" y="343" text-anchor="middle" textLength="46" lengthAdjust="spacingAndGlyphs">Time (ms)</text>
<text transform="translate(247.1,226) rotate(-90)" text-anchor="middle" textLength="47.6" lengthAdjust="spacingAndGlyphs">Amplitude</text>
<linearGradient id="bg1" x1="0" x2="0" y1="0" y2="1"><stop offset="0" stop-color="#b4b4b4"/><stop offset="1" stop-color="#8e8e8e"/></linearGradient>
<rect x="253.9" y="310" width="1.4" height="6.3" fill="#1c1c1c"/>
<rect x="219.5" y="320.3" width="50" height="26.6" fill="#b2b2b2"/>
<polygon points="219.5,320.3 269.5,320.3 262.0,327.6 219.5,327.6" fill="url(#bg1)"/>
<polygon points="269.5,320.3 269.5,346.90000000000003 262.0,342.40000000000003 262.0,327.6" fill="#cbcbcb"/>
<rect x="219.5" y="328.1" width="42.5" height="14.2" fill="#d3d3d3"/>
<rect x="219.5" y="327.6" width="42.5" height="1" fill="#9a9a9a"/>
<svg x="219.5" y="328.1" width="40.7" height="14.2" overflow="hidden"><text class="cv" x="-3.2" y="11">0.165213</text></svg>
<svg x="245" y="318" width="20" height="5.6" overflow="hidden"><text x="9" y="10.2" text-anchor="middle">0</text></svg>
<text x="273.2" y="338.8" textLength="6.3" lengthAdjust="spacingAndGlyphs">X</text>
<rect x="219.5" y="348.9" width="395" height="37.5" fill="#fdfdfd"/>
<rect x="219.5" y="351.3" width="49.5" height="26" fill="#b2b2b2"/>
<polygon points="219.5,351.3 269.0,351.3 262.0,357.9 219.5,357.9" fill="url(#bg1)"/>
<polygon points="269.0,351.3 269.0,377.3 262.0,372.8 262.0,357.9" fill="#f3f3f3"/>
<rect x="219.5" y="358.4" width="42.5" height="14.2" fill="#d3d3d3"/>
<rect x="219.5" y="357.9" width="42.5" height="1" fill="#9a9a9a"/>
<svg x="219.5" y="358.4" width="40.7" height="14.2" overflow="hidden"><text class="cv" x="-3.2" y="12.3">0.202752</text></svg>
<text x="270.3" y="371.2" textLength="6.1" lengthAdjust="spacingAndGlyphs">Y</text>
<rect x="379.5" y="351" width="90" height="23.5" fill="#bcbcbc"/>
<linearGradient id="tg" x1="0" x2="1" y1="0" y2="0"><stop offset="0" stop-color="#d2d2d2"/><stop offset="0.12" stop-color="#c4c4c4"/><stop offset="0.8" stop-color="#bcbcbc"/><stop offset="0.93" stop-color="#9a9a9a"/><stop offset="1" stop-color="#6c6c6c"/></linearGradient>
<rect x="379.5" y="351" width="90" height="23.5" fill="url(#tg)"/>
<rect x="379.5" y="351" width="90" height="1.2" fill="#d6d6d6"/>
<rect x="381" y="373.3" width="88.5" height="1.4" fill="#7c7c7c"/>
<rect x="468.3" y="351" width="1.4" height="23.5" fill="#5e5e5e"/>
<rect x="394" y="354.5" width="18.7" height="15.5" fill="#cecece"/>
<rect x="394" y="369.3" width="18.7" height="1.2" fill="#8e8e8e"/><rect x="412" y="354.5" width="1.2" height="16" fill="#a2a2a2"/>
<rect x="394" y="354.5" width="18.7" height="1" fill="#e0e0e0"/>
<circle cx="397.4" cy="358.9" r="1.5" fill="#2c8c2c"/>
<path d="M403.6 356.8V369.8M397.2 362.9H409.8" stroke="#0a0a0a" stroke-width="1.5" fill="none"/>
<circle cx="403.6" cy="362.9" r="1.5" fill="#d8d8d8" stroke="#0a0a0a" stroke-width="1"/>
<rect x="414.6" y="354.5" width="19.4" height="16" fill="#7c7c7c"/>
<rect x="414.6" y="354.5" width="19.4" height="1.2" fill="#5c5c5c"/><rect x="414.6" y="354.5" width="1.2" height="16" fill="#5c5c5c"/>
<circle cx="418.5" cy="358.9" r="1.7" fill="#34e234"/>
<path d="M423.9 364.1L418.7 369.3" stroke="#b8b8b8" stroke-width="3.2" stroke-linecap="butt"/>
<path d="M424 364L418.6 369.4" stroke="#0c0c0c" stroke-width="2"/>
<circle cx="426.7" cy="361.2" r="3.8" fill="#dcdcf6" stroke="#1c1c1c" stroke-width="1.4"/>
<path d="M424.3 361.2H429.1M426.7 358.8V363.6" stroke="#16164a" stroke-width="1.5"/>
<path d="M426.6 367.2H431L428.8 369.8Z" fill="#0c0c0c"/>
<rect x="436.4" y="354.5" width="18.8" height="15.5" fill="#cecece"/>
<rect x="436.4" y="369.3" width="18.8" height="1.2" fill="#8e8e8e"/><rect x="454.4" y="354.5" width="1.2" height="16" fill="#a2a2a2"/>
<rect x="436.4" y="354.5" width="18.8" height="1" fill="#e0e0e0"/>
<circle cx="439.7" cy="358.9" r="1.5" fill="#2c8c2c"/>
<path d="M443.8 369.6C443 367.5 440.8 365.8 440 363.6C439.6 362.2 441 361.4 442 362.4L443.6 364.2V359C443.6 357.6 445.4 357.6 445.5 358.8V357.6C445.6 356.2 447.5 356.2 447.6 357.6V358C447.8 356.8 449.6 356.9 449.6 358.2V359.4C449.9 358.4 451.6 358.5 451.6 359.8L452.3 363.5C452.4 366 450.8 367.5 450.4 369.6" fill="#dedede" stroke="#141414" stroke-width="1"/>
<path d="M445.5 358.8V362.6M447.6 358V362.6M449.6 359.4V362.6" stroke="#3a3a3a" stroke-width="0.9" fill="none"/>
<rect x="505.5" y="366" width="109" height="20.5" fill="#c2c2c2"/>
<rect x="505.5" y="366" width="109" height="1.2" fill="#dcdcdc"/><rect x="505.5" y="366" width="3" height="20.5" fill="#cecece"/>
<rect x="507" y="385.3" width="107.5" height="1.3" fill="#9c9c9c"/>
<rect x="516" y="368" width="58" height="16" fill="#c8c8c8"/>
<text x="519.7" y="379.8" textLength="45.3" lengthAdjust="spacingAndGlyphs" style="font-size:11px">Dev1_ai2</text>
<rect x="577" y="368.2" width="27.8" height="15.3" fill="#000"/>
<polyline points="579.5,379.4 588,371.6 595.6,379.2 603.8,371.6" fill="none" stroke="#f4f4f4" stroke-width="1.1"/>
<rect x="606" y="366" width="8.5" height="20.5" fill="#b8b8b8"/>
<rect x="219.5" y="386.5" width="395" height="211.5" fill="#c0c0c0"/>
<rect x="219.5" y="386.5" width="286" height="1.5" fill="#dcdcdc"/>
<rect x="505.5" y="386.5" width="109" height="2" fill="#d0d0d0"/>
<rect x="602" y="389" width="12.5" height="209" fill="#c9c9c9"/>
<rect x="613" y="389" width="1.5" height="209" fill="#b0b0b0"/>
<rect x="283.5" y="395.5" width="314.5" height="169.1" fill="#dedede"/>
<rect x="284.5" y="396.5" width="312.5" height="167.1" fill="#000"/>
<clipPath id="c2"><rect x="284.5" y="396.5" width="312.5" height="167.1"/></clipPath>
<g clip-path="url(#c2)">
<rect x="290.84" y="396.5" width="1.35" height="167.1" fill="#003400"/>
<rect x="297.06" y="396.5" width="1.35" height="167.1" fill="#003400"/>
<rect x="303.28" y="396.5" width="1.35" height="167.1" fill="#003400"/>
<rect x="309.5" y="396.5" width="1.35" height="167.1" fill="#003400"/>
<rect x="315.72" y="396.5" width="1.35" height="167.1" fill="#003400"/>
<rect x="321.94" y="396.5" width="1.35" height="167.1" fill="#003400"/>
<rect x="328.16" y="396.5" width="1.35" height="167.1" fill="#003400"/>
<rect x="334.38" y="396.5" width="1.35" height="167.1" fill="#003400"/>
<rect x="340.6" y="396.5" width="1.35" height="167.1" fill="#003400"/>
<rect x="346.7" y="396.5" width="1.6" height="167.1" fill="#006000"/>
<rect x="353.04" y="396.5" width="1.35" height="167.1" fill="#003400"/>
<rect x="359.26" y="396.5" width="1.35" height="167.1" fill="#003400"/>
<rect x="365.48" y="396.5" width="1.35" height="167.1" fill="#003400"/>
<rect x="371.7" y="396.5" width="1.35" height="167.1" fill="#003400"/>
<rect x="377.92" y="396.5" width="1.35" height="167.1" fill="#003400"/>
<rect x="384.14" y="396.5" width="1.35" height="167.1" fill="#003400"/>
<rect x="390.36" y="396.5" width="1.35" height="167.1" fill="#003400"/>
<rect x="396.58" y="396.5" width="1.35" height="167.1" fill="#003400"/>
<rect x="402.8" y="396.5" width="1.35" height="167.1" fill="#003400"/>
<rect x="408.9" y="396.5" width="1.6" height="167.1" fill="#006000"/>
<rect x="415.24" y="396.5" width="1.35" height="167.1" fill="#003400"/>
<rect x="421.46" y="396.5" width="1.35" height="167.1" fill="#003400"/>
<rect x="427.68" y="396.5" width="1.35" height="167.1" fill="#003400"/>
<rect x="433.9" y="396.5" width="1.35" height="167.1" fill="#003400"/>
<rect x="440.12" y="396.5" width="1.35" height="167.1" fill="#003400"/>
<rect x="446.34" y="396.5" width="1.35" height="167.1" fill="#003400"/>
<rect x="452.56" y="396.5" width="1.35" height="167.1" fill="#003400"/>
<rect x="458.78" y="396.5" width="1.35" height="167.1" fill="#003400"/>
<rect x="465" y="396.5" width="1.35" height="167.1" fill="#003400"/>
<rect x="471.1" y="396.5" width="1.6" height="167.1" fill="#006000"/>
<rect x="477.44" y="396.5" width="1.35" height="167.1" fill="#003400"/>
<rect x="483.66" y="396.5" width="1.35" height="167.1" fill="#003400"/>
<rect x="489.88" y="396.5" width="1.35" height="167.1" fill="#003400"/>
<rect x="496.1" y="396.5" width="1.35" height="167.1" fill="#003400"/>
<rect x="502.32" y="396.5" width="1.35" height="167.1" fill="#003400"/>
<rect x="508.54" y="396.5" width="1.35" height="167.1" fill="#003400"/>
<rect x="514.76" y="396.5" width="1.35" height="167.1" fill="#003400"/>
<rect x="520.98" y="396.5" width="1.35" height="167.1" fill="#003400"/>
<rect x="527.2" y="396.5" width="1.35" height="167.1" fill="#003400"/>
<rect x="533.3" y="396.5" width="1.6" height="167.1" fill="#006000"/>
<rect x="539.64" y="396.5" width="1.35" height="167.1" fill="#003400"/>
<rect x="545.86" y="396.5" width="1.35" height="167.1" fill="#003400"/>
<rect x="552.08" y="396.5" width="1.35" height="167.1" fill="#003400"/>
<rect x="558.3" y="396.5" width="1.35" height="167.1" fill="#003400"/>
<rect x="564.52" y="396.5" width="1.35" height="167.1" fill="#003400"/>
<rect x="570.74" y="396.5" width="1.35" height="167.1" fill="#003400"/>
<rect x="576.96" y="396.5" width="1.35" height="167.1" fill="#003400"/>
<rect x="583.18" y="396.5" width="1.35" height="167.1" fill="#003400"/>
<rect x="589.4" y="396.5" width="1.35" height="167.1" fill="#003400"/>
<rect x="595.5" y="396.5" width="1.6" height="167.1" fill="#006000"/>
<rect x="284.5" y="544.18" width="312.5" height="1.8" fill="#005a00"/>
<rect x="284.5" y="525.67" width="312.5" height="1.8" fill="#005a00"/>
<rect x="284.5" y="507.15" width="312.5" height="1.8" fill="#005a00"/>
<rect x="284.5" y="488.64" width="312.5" height="1.8" fill="#005a00"/>
<rect x="284.5" y="470.12" width="312.5" height="1.8" fill="#005a00"/>
<rect x="284.5" y="451.61" width="312.5" height="1.8" fill="#005a00"/>
<rect x="284.5" y="433.09" width="312.5" height="1.8" fill="#005a00"/>
<rect x="284.5" y="414.58" width="312.5" height="1.8" fill="#005a00"/>
<rect x="285" y="403" width="22" height="2" fill="#fff"/>
<polyline fill="none" stroke="#fff" stroke-width="1.3" points="285,404 389.4,404 389.4,546.6 393,547.6 400,548.2 490,548.3 520,547.3 560,546.2 597,544.8"/>
<rect x="422" y="547" width="14" height="1.6" fill="#fff"/><rect x="500" y="546.6" width="12" height="1.6" fill="#fff"/><rect x="560" y="545.2" width="20" height="1.6" fill="#fff"/>
</g>
<rect x="277.8" y="562.9" width="5.2" height="1.4" fill="#1c1c1c"/>
<text class="yl" x="275.8" y="568.4" text-anchor="end">0.5</text>
<rect x="277.8" y="544.9" width="5.2" height="1.4" fill="#1c1c1c"/>
<text class="yl" x="275.8" y="549.9" text-anchor="end">0.75</text>
<rect x="277.8" y="525.9" width="5.2" height="1.4" fill="#1c1c1c"/>
<text class="yl" x="275.8" y="531.4" text-anchor="end">1</text>
<rect x="277.8" y="507.9" width="5.2" height="1.4" fill="#1c1c1c"/>
<text class="yl" x="275.8" y="512.9" text-anchor="end">1.25</text>
<rect x="277.8" y="488.9" width="5.2" height="1.4" fill="#1c1c1c"/>
<text class="yl" x="275.8" y="494.3" text-anchor="end">1.5</text>
<rect x="277.8" y="470.9" width="5.2" height="1.4" fill="#1c1c1c"/>
<text class="yl" x="275.8" y="475.8" text-anchor="end">1.75</text>
<rect x="277.8" y="451.9" width="5.2" height="1.4" fill="#1c1c1c"/>
<text class="yl" x="275.8" y="457.3" text-anchor="end">2</text>
<rect x="277.8" y="433.9" width="5.2" height="1.4" fill="#1c1c1c"/>
<text class="yl" x="275.8" y="438.8" text-anchor="end">2.25</text>
<rect x="277.8" y="414.9" width="5.2" height="1.4" fill="#1c1c1c"/>
<text class="yl" x="275.8" y="420.3" text-anchor="end">2.5</text>
<rect x="277.8" y="396.9" width="5.2" height="1.4" fill="#1c1c1c"/>
<text class="yl" x="275.8" y="401.8" text-anchor="end">2.75</text>
<rect x="284.9" y="566" width="1.4" height="5" fill="#1c1c1c"/>
<text x="284.7" y="582.3" text-anchor="middle">0</text>
<rect x="346.9" y="566" width="1.4" height="5" fill="#1c1c1c"/>
<text x="346.5" y="582.3" text-anchor="middle">2000</text>
<rect x="408.9" y="566" width="1.4" height="5" fill="#1c1c1c"/>
<text x="408.7" y="582.3" text-anchor="middle">4000</text>
<rect x="471.9" y="566" width="1.4" height="5" fill="#1c1c1c"/>
<text x="470.9" y="582.3" text-anchor="middle">6000</text>
<rect x="533.9" y="566" width="1.4" height="5" fill="#1c1c1c"/>
<text x="533.1" y="582.3" text-anchor="middle">8000</text>
<rect x="595.9" y="566" width="1.4" height="5" fill="#1c1c1c"/>
<text x="595.3" y="582.3" text-anchor="middle">10000</text>
<svg x="400" y="584" width="80" height="13.5" overflow="hidden"><text x="40.3" y="12" text-anchor="middle" textLength="45" lengthAdjust="spacingAndGlyphs">Time (ms)</text></svg>
<text transform="translate(246.6,480.5) rotate(-90)" text-anchor="middle" textLength="46.8" lengthAdjust="spacingAndGlyphs">Amplitude</text>
<svg x="219.5" y="386.5" width="14" height="12" overflow="hidden"><text x="10.8" y="9.3" text-anchor="end">Maximum</text></svg>
<rect x="219.5" y="574" width="62.5" height="24" fill="#b4b4b4"/>
<polygon points="219.5,574 282,574 275.5,580 219.5,580" fill="#a4a4a4"/>
<polygon points="282,574 282,598 275.5,598 275.5,580" fill="#c8c8c8"/>
<rect x="219.5" y="580" width="7" height="18" fill="#acacac"/>
<rect x="227.5" y="581" width="46.5" height="13.5" fill="#dedede" stroke="#9c9c9c" stroke-width="1"/>
<svg x="227.5" y="581" width="44.6" height="13.5" overflow="hidden"><text class="cv" x="1.8" y="11.9">0.740039</text></svg>
<rect x="506" y="597" width="108.5" height="2" fill="#e4e4e4"/>
<rect x="219.5" y="598" width="395" height="1" fill="#f2f2f2"/>
</svg></body></html>
